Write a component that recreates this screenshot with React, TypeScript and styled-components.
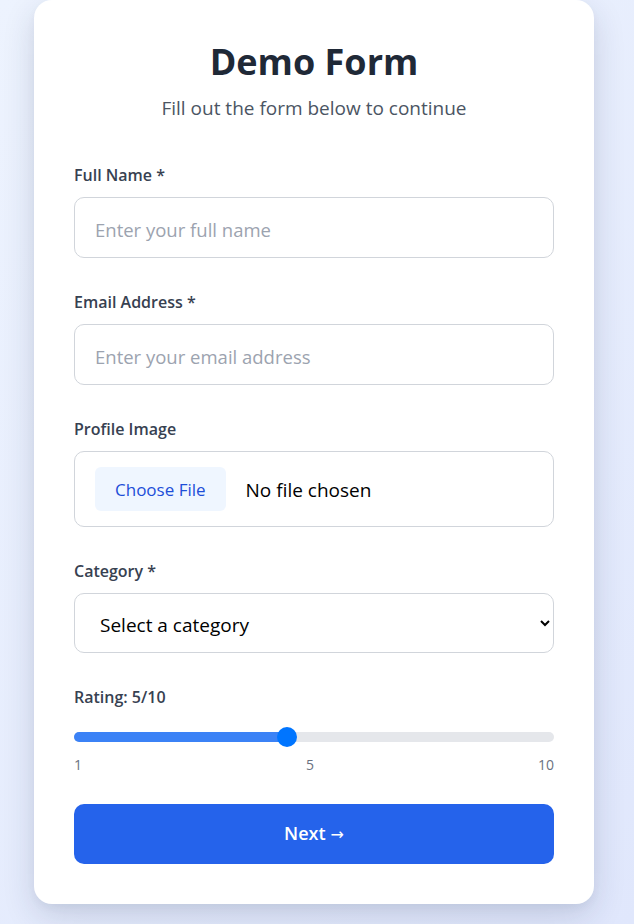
import React, { useState } from "react";
import styled, { createGlobalStyle } from "styled-components";

const GlobalStyle = createGlobalStyle`
  * { box-sizing: border-box; }
  html, body { margin: 0; padding: 0; }
  body {
    font-family: "Open Sans", "Noto Sans", sans-serif;
    background: linear-gradient(135deg, #edf3fe 0%, #e0e7fc 100%);
    min-height: 100vh;
  }
`;

const Page = styled.div`
  min-height: 100vh;
  padding: 0 40px 21px 34px;
`;

const Card = styled.form`
  width: 560px;
  background: #ffffff;
  border-radius: 18px;
  padding: 40px 40px 40px;
  box-shadow: 0 12px 32px rgba(30, 41, 80, 0.16), 0 4px 8px rgba(30, 41, 80, 0.04);
`;

const Header = styled.header`
  text-align: center;
  margin-bottom: 41px;
`;

const Title = styled.h1`
  margin: 0;
  font-size: 36px;
  line-height: 44px;
  font-weight: 700;
  color: #1f2937;
`;

const Subtitle = styled.p`
  margin: 10px 0 0;
  font-size: 19px;
  line-height: 28px;
  color: #4b5563;
`;

const Field = styled.div<{ $last?: boolean }>`
  display: flex;
  flex-direction: column;
  margin-bottom: ${(p) => (p.$last ? "29px" : "32px")};
`;

const Label = styled.label<{ $gap?: number }>`
  font-size: 16px;
  line-height: 24px;
  font-weight: 600;
  color: #374151;
  margin-bottom: ${(p) => p.$gap ?? 10}px;
`;

const TextInput = styled.input`
  width: 100%;
  padding: 18px 20px 14px;
  font-family: inherit;
  font-size: 18.5px;
  line-height: 27px;
  color: #111827;
  border: 1px solid #d1d5db;
  border-radius: 10px;
  background: #fff;
  outline: none;
  &::placeholder { color: #9ca3af; }
`;

const FileBox = styled.div`
  display: flex;
  align-items: center;
  gap: 20px;
  padding: 15px 20px;
  border: 1px solid #d1d5db;
  border-radius: 10px;
`;

const FileButton = styled.button`
  height: 44px;
  padding: 0 20px;
  border: none;
  border-radius: 6px;
  background: #eff6ff;
  color: #1d4ed8;
  font-family: inherit;
  font-size: 17px;
  font-weight: 500;
  cursor: pointer;
`;

const FileText = styled.span`
  font-size: 19px;
  color: #000;
  padding-top: 2px;
`;

const Select = styled.select`
  width: 100%;
  height: 60px;
  padding: 4px 12px 0 21px;
  font-family: inherit;
  font-size: 19px;
  color: #000;
  border: 1px solid #d1d5db;
  border-radius: 10px;
  background: #fff;
  outline: none;
`;

const SliderTrack = styled.div`
  position: relative;
  height: 20px;
  display: flex;
  align-items: center;
  margin-bottom: 8px;
`;

const Rail = styled.div`
  width: 100%;
  height: 10px;
  border-radius: 5px;
  background: #e5e7eb;
  overflow: hidden;
`;

const Fill = styled.div`
  height: 100%;
  background: #3b82f6;
`;

const Thumb = styled.div`
  position: absolute;
  top: 0;
  width: 20px;
  height: 20px;
  margin-left: -10px;
  border-radius: 50%;
  background: #0075ff;
`;

const Ticks = styled.div`
  display: flex;
  justify-content: space-between;
  font-size: 14px;
  line-height: 20px;
  color: #6b7280;
`;

const Submit = styled.button`
  width: 100%;
  padding: 16px;
  border: none;
  border-radius: 10px;
  background: #2563eb;
  color: #fff;
  font-family: inherit;
  font-size: 18px;
  line-height: 27px;
  font-weight: 600;
  cursor: pointer;
`;

const Arrow = styled.span`
  font-family: "DejaVu Sans", sans-serif;
  font-weight: 400;
  font-size: 16px;
  margin-left: 5px;
`;

export default function App() {
  const [rating] = useState(5);
  const pct = ((rating - 1) / 9) * 100;
  return (
    <>
      <GlobalStyle />
      <Page>
        <Card onSubmit={(e) => e.preventDefault()}>
          <Header>
            <Title>Demo Form</Title>
            <Subtitle>Fill out the form below to continue</Subtitle>
          </Header>

          <Field>
            <Label htmlFor="name">Full Name *</Label>
            <TextInput id="name" placeholder="Enter your full name" />
          </Field>

          <Field>
            <Label htmlFor="email">Email Address *</Label>
            <TextInput id="email" placeholder="Enter your email address" />
          </Field>

          <Field>
            <Label>Profile Image</Label>
            <FileBox>
              <FileButton type="button">Choose File</FileButton>
              <FileText>No file chosen</FileText>
            </FileBox>
          </Field>

          <Field>
            <Label htmlFor="cat">Category *</Label>
            <Select id="cat" defaultValue="">
              <option value="">Select a category</option>
              <option value="a">General</option>
              <option value="b">Support</option>
            </Select>
          </Field>

          <Field $last>
            <Label $gap={18}>Rating: {rating}/10</Label>
            <SliderTrack>
              <Rail>
                <Fill style={{ width: `${pct}%` }} />
              </Rail>
              <Thumb style={{ left: `${pct}%` }} />
            </SliderTrack>
            <Ticks>
              <span>1</span>
              <span>5</span>
              <span>10</span>
            </Ticks>
          </Field>

          <Submit type="submit">
            Next<Arrow>→</Arrow>
          </Submit>
        </Card>
      </Page>
    </>
  );
}
